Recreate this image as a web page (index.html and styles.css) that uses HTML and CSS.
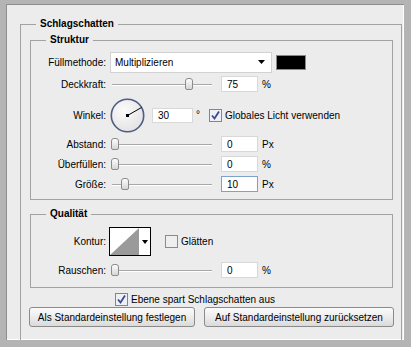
FILE: index.html
```html
<!DOCTYPE html>
<html lang="de">
<head>
  <meta charset="UTF-8">
  <title>Schlagschatten</title>
  <link rel="stylesheet" href="styles.css">
</head>
<body>
  <div class="window">
    <fieldset class="group group-main">
      <legend>Schlagschatten</legend>

      <!-- Struktur -->
      <fieldset class="group group-sub">
        <legend>Struktur</legend>
        <div class="row row-select">
          <label class="lbl">Füllmethode:</label>
          <div class="select">
            <span>Multiplizieren</span>
            <svg width="8" height="5" viewBox="0 0 8 5"><path d="M0 0H7L3.5 4Z" fill="#000"/></svg>
          </div>
          <div class="swatch"></div>
        </div>
        <div class="row">
          <label class="lbl">Deckkraft:</label>
          <div class="slider"><div class="thumb" style="left:75px"></div></div>
          <input class="field" type="text" value="75">
          <span class="unit">%</span>
        </div>
        <div class="row row-angle">
          <label class="lbl">Winkel:</label>
          <svg class="dial" width="35" height="35" viewBox="0 0 35 35">
            <defs>
              <radialGradient id="dialFill" cx="0.4" cy="0.35" r="0.7">
                <stop offset="0" stop-color="#fbfbfb"/>
                <stop offset="1" stop-color="#e2e2e2"/>
              </radialGradient>
            </defs>
            <circle cx="17.5" cy="17.5" r="16.2" fill="url(#dialFill)" stroke="#4d5d84" stroke-width="1.6"/>
            <line x1="17.5" y1="17.5" x2="31.5" y2="9.5" stroke="#000" stroke-width="1"/>
            <rect x="16" y="16" width="3" height="3" fill="#000"/>
          </svg>
          <input class="field field-angle" type="text" value="30">
          <span class="unit deg">°</span>
          <span class="check">
            <svg width="13" height="13" viewBox="0 0 13 13">
              <rect x="0.5" y="0.5" width="12" height="12" fill="#eef0f6" stroke="#7d8597"/>
              <path d="M3 6.5L5.5 9.5L10 2.5" fill="none" stroke="#3a4a8e" stroke-width="1.8"/>
            </svg>
            <span>Globales Licht verwenden</span>
          </span>
        </div>
        <div class="row row-tight">
          <label class="lbl">Abstand:</label>
          <div class="slider"><div class="thumb" style="left:1px"></div></div>
          <input class="field" type="text" value="0">
          <span class="unit">Px</span>
        </div>
        <div class="row">
          <label class="lbl">Überfüllen:</label>
          <div class="slider"><div class="thumb" style="left:1px"></div></div>
          <input class="field" type="text" value="0">
          <span class="unit">%</span>
        </div>
        <div class="row">
          <label class="lbl">Größe:</label>
          <div class="slider"><div class="thumb" style="left:11px"></div></div>
          <input class="field field-focus" type="text" value="10">
          <span class="unit">Px</span>
        </div>
      </fieldset>

      <!-- Qualität -->
      <fieldset class="group group-sub group-quality">
        <legend>Qualität</legend>
        <div class="row row-contour">
          <label class="lbl">Kontur:</label>
          <svg class="contour" width="42" height="29" viewBox="0 0 42 29">
            <rect x="0.5" y="0.5" width="41" height="28" fill="#fff" stroke="#000"/>
            <path d="M1 28L30 1V28Z" fill="#9a9a9a"/>
            <path d="M33 13H39L36 17Z" fill="#000"/>
          </svg>
          <span class="check check-smooth">
            <svg width="13" height="13" viewBox="0 0 13 13">
              <rect x="0.5" y="0.5" width="12" height="12" fill="#eeeeee" stroke="#8a8a8a"/>
            </svg>
            <span>Glätten</span>
          </span>
        </div>
        <div class="row row-noise">
          <label class="lbl">Rauschen:</label>
          <div class="slider"><div class="thumb" style="left:1px"></div></div>
          <input class="field" type="text" value="0">
          <span class="unit">%</span>
        </div>
      </fieldset>

      <div class="knockout">
        <span class="check">
          <svg width="13" height="13" viewBox="0 0 13 13">
            <rect x="0.5" y="0.5" width="12" height="12" fill="#eef0f6" stroke="#7d8597"/>
            <path d="M3 6.5L5.5 9.5L10 2.5" fill="none" stroke="#3a4a8e" stroke-width="1.8"/>
          </svg>
          <span>Ebene spart Schlagschatten aus</span>
        </span>
      </div>

      <div class="buttons">
        <button class="btn btn-save">Als Standardeinstellung festlegen</button>
        <button class="btn btn-reset">Auf Standardeinstellung zurücksetzen</button>
      </div>
    </fieldset>
  </div>
</body>
</html>
```

FILE: styles.css
```css
body {
  margin: 0;
  font-family: "Liberation Sans", Arial, sans-serif;
  font-size: 10px;
  color: #000;
}

/* dialog frame */
.window {
  width: 411px;
  height: 347px;
  box-sizing: border-box;
  border-style: solid;
  border-color: #b4b4b4;
  border-width: 4px 7px 7px 6px;
  background-color: #ececec;
  box-shadow: inset 1px 1px 0 #8e8e8e, inset -1px -1px 0 #fff;
  overflow: hidden;
}

/* group boxes */
.group {
  border: 1px solid #a2a2a2;
  margin: 0;
  min-width: 0;
}

.group > legend {
  font-weight: bold;
  line-height: 12px;
  padding: 0 4px;
}

.group-main {
  margin: 14px 2px 0 14px;
  padding: 4px 7px 20px 8px;
}

.group-main > legend {
  margin-left: 7px;
}

.group-sub {
  margin: 0 1px;
  padding: 6px 0 6px 0;
}

.group-sub > legend {
  margin-left: 15px;
}

.group-quality {
  margin-top: 8px;
  padding: 7px 0 8px 0;
}

/* rows */
.row {
  display: flex;
  align-items: center;
  height: 18px;
  margin-top: 2px;
}

.row-select {
  height: 21px;
  margin-top: 0;
}

.row-angle {
  height: 38px;
  margin-top: 3px;
}

.row-tight {
  margin-top: 1px;
}

.row-contour {
  height: 29px;
  margin-top: 0;
}

.row-noise {
  margin-top: 5px;
}

.lbl {
  width: 77px;
  padding-right: 2px;
  box-sizing: border-box;
  text-align: right;
  flex-shrink: 0;
}

/* controls */
.select {
  width: 162px;
  height: 21px;
  box-sizing: border-box;
  margin-left: 2px;
  padding: 0 5px 0 4px;
  border: 1px solid #d2d2d2;
  background-color: #fff;
  display: flex;
  align-items: center;
  justify-content: space-between;
}

.swatch {
  width: 30px;
  height: 15px;
  box-sizing: border-box;
  margin-left: 4px;
  background-color: #000;
  border: 1px solid #888;
}

.slider {
  position: relative;
  width: 102px;
  height: 18px;
  margin-left: 2px;
  flex-shrink: 0;
}

.slider::before {
  content: "";
  position: absolute;
  left: 2px;
  right: 0;
  top: 9px;
  height: 1px;
  background-color: #a8a8a8;
  box-shadow: 0 1px 0 #fff;
}

.thumb {
  position: absolute;
  top: 3px;
  width: 6px;
  height: 10px;
  border: 1px solid #8c8c8c;
  border-radius: 3px 3px 2px 2px;
  background: linear-gradient(#fdfdfd, #d6d6d6);
}

.field {
  width: 37px;
  height: 16px;
  box-sizing: border-box;
  margin: 0 0 0 9px;
  padding: 0 0 0 5px;
  border: 1px solid #d8d8d8;
  background-color: #fff;
  font: inherit;
  color: #000;
  outline: none;
}

.field-angle {
  width: 41px;
  height: 15px;
  margin-left: 7px;
}

.field-focus {
  border-color: #7da2ce;
}

.unit {
  margin-left: 4px;
}

.deg {
  margin-left: 3px;
  align-self: flex-start;
  margin-top: 13px;
}

.dial {
  margin-left: 2px;
  flex-shrink: 0;
}

.check {
  display: inline-flex;
  align-items: center;
  margin-left: 9px;
}

.check svg {
  margin-right: 3px;
}

.contour {
  margin-left: 1px;
}

.check-smooth {
  margin-left: 14px;
}

/* footer */
.knockout {
  margin-top: 5px;
  height: 12px;
  display: flex;
  align-items: center;
  padding-left: 77px;
}

.buttons {
  display: flex;
  gap: 9px;
  margin-top: 2px;
}

.btn {
  height: 20px;
  padding: 0;
  border: 1px solid #8a8a8a;
  border-radius: 3px;
  background: linear-gradient(#fbfbfb, #ececec 50%, #dadada);
  font: inherit;
  color: #000;
}

.btn-save {
  width: 166px;
}

.btn-reset {
  width: 190px;
}
```
